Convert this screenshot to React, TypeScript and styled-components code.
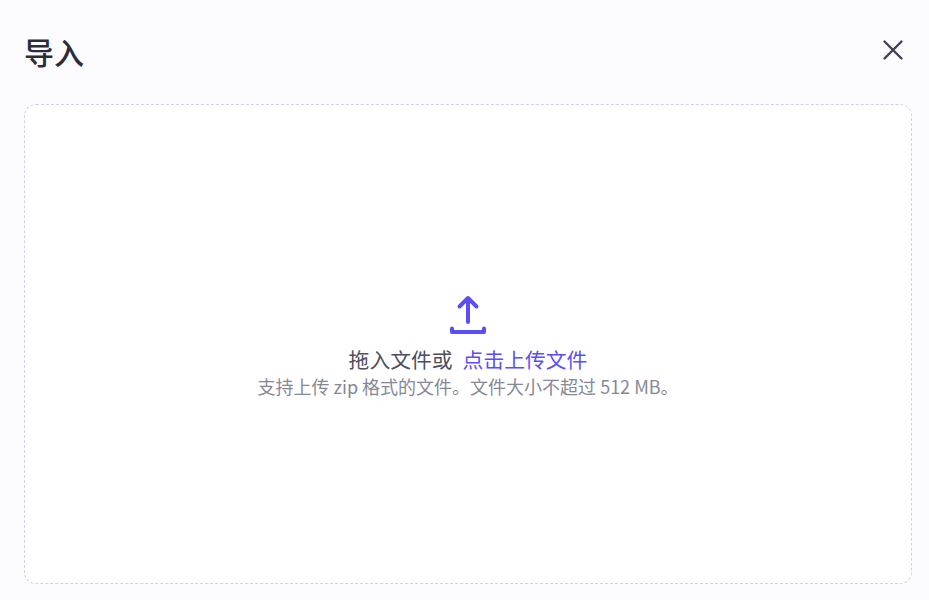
import styled, { createGlobalStyle } from "styled-components";

const GlobalStyle = createGlobalStyle`
  html, body {
    margin: 0;
    height: 100%;
    background: #fcfcff;
  }
  #root {
    height: 100%;
  }
`;

const Dialog = styled.div`
  box-sizing: border-box;
  width: 929px;
  height: 600px;
  padding: 0 17px 16px 24px;
  display: flex;
  flex-direction: column;
  background: #fcfcff;
  font-family: "Noto Sans CJK SC", sans-serif;
  overflow: hidden;
`;

const Header = styled.div`
  height: 104px;
  flex: none;
  display: flex;
  justify-content: space-between;
  align-items: flex-start;
`;

const Title = styled.h1`
  margin: 31px 0 0;
  font-size: 30px;
  line-height: 40px;
  font-weight: 500;
  color: #2b2d3c;
`;

const CloseButton = styled.button`
  margin: 38px 7px 0 0;
  width: 24px;
  height: 24px;
  padding: 0;
  border: 0;
  background: none;
  color: #3f4152;
  cursor: pointer;
  svg {
    display: block;
  }
`;

const DropZone = styled.div`
  flex: 1;
  display: flex;
  flex-direction: column;
  align-items: center;
  justify-content: center;
  background: #ffffff;
  border: 1px dashed #d5cfe6;
  border-radius: 12px;
`;

const UploadIcon = styled.svg`
  display: block;
  width: 40px;
  height: 48px;
  color: #5a4ff5;
`;

const Prompt = styled.div`
  margin-top: 8px;
  font-size: 20.8px;
  line-height: 28px;
  color: #4c4e5e;
`;

const Link = styled.span`
  color: #5a4ff5;
  margin-left: 10px;
  cursor: pointer;
`;

const Hint = styled.div`
  font-size: 18px;
  line-height: 26px;
  color: #868896;
`;

export default function App() {
  return (
    <>
      <GlobalStyle />
      <Dialog>
        <Header>
          <Title>导入</Title>
          <CloseButton aria-label="close">
            <svg width="24" height="24" viewBox="0 0 24 24" fill="none" stroke="currentColor" strokeWidth="2.4" strokeLinecap="round">
              <path d="M3.5 3.5 20.5 20.5M20.5 3.5 3.5 20.5" />
            </svg>
          </CloseButton>
        </Header>
        <DropZone>
          <UploadIcon viewBox="0 0 40 48" fill="none" stroke="currentColor" strokeLinecap="round" strokeLinejoin="round" strokeWidth="4">
            <path d="M20 33V9M11.5 17.5 20 9 28.5 17.5" />
            <path d="M4 39.5V43H36V39.5" />
          </UploadIcon>
          <Prompt>
            拖入文件或<Link>点击上传文件</Link>
          </Prompt>
          <Hint>支持上传 zip 格式的文件。文件大小不超过 512 MB。</Hint>
        </DropZone>
      </Dialog>
    </>
  );
}
